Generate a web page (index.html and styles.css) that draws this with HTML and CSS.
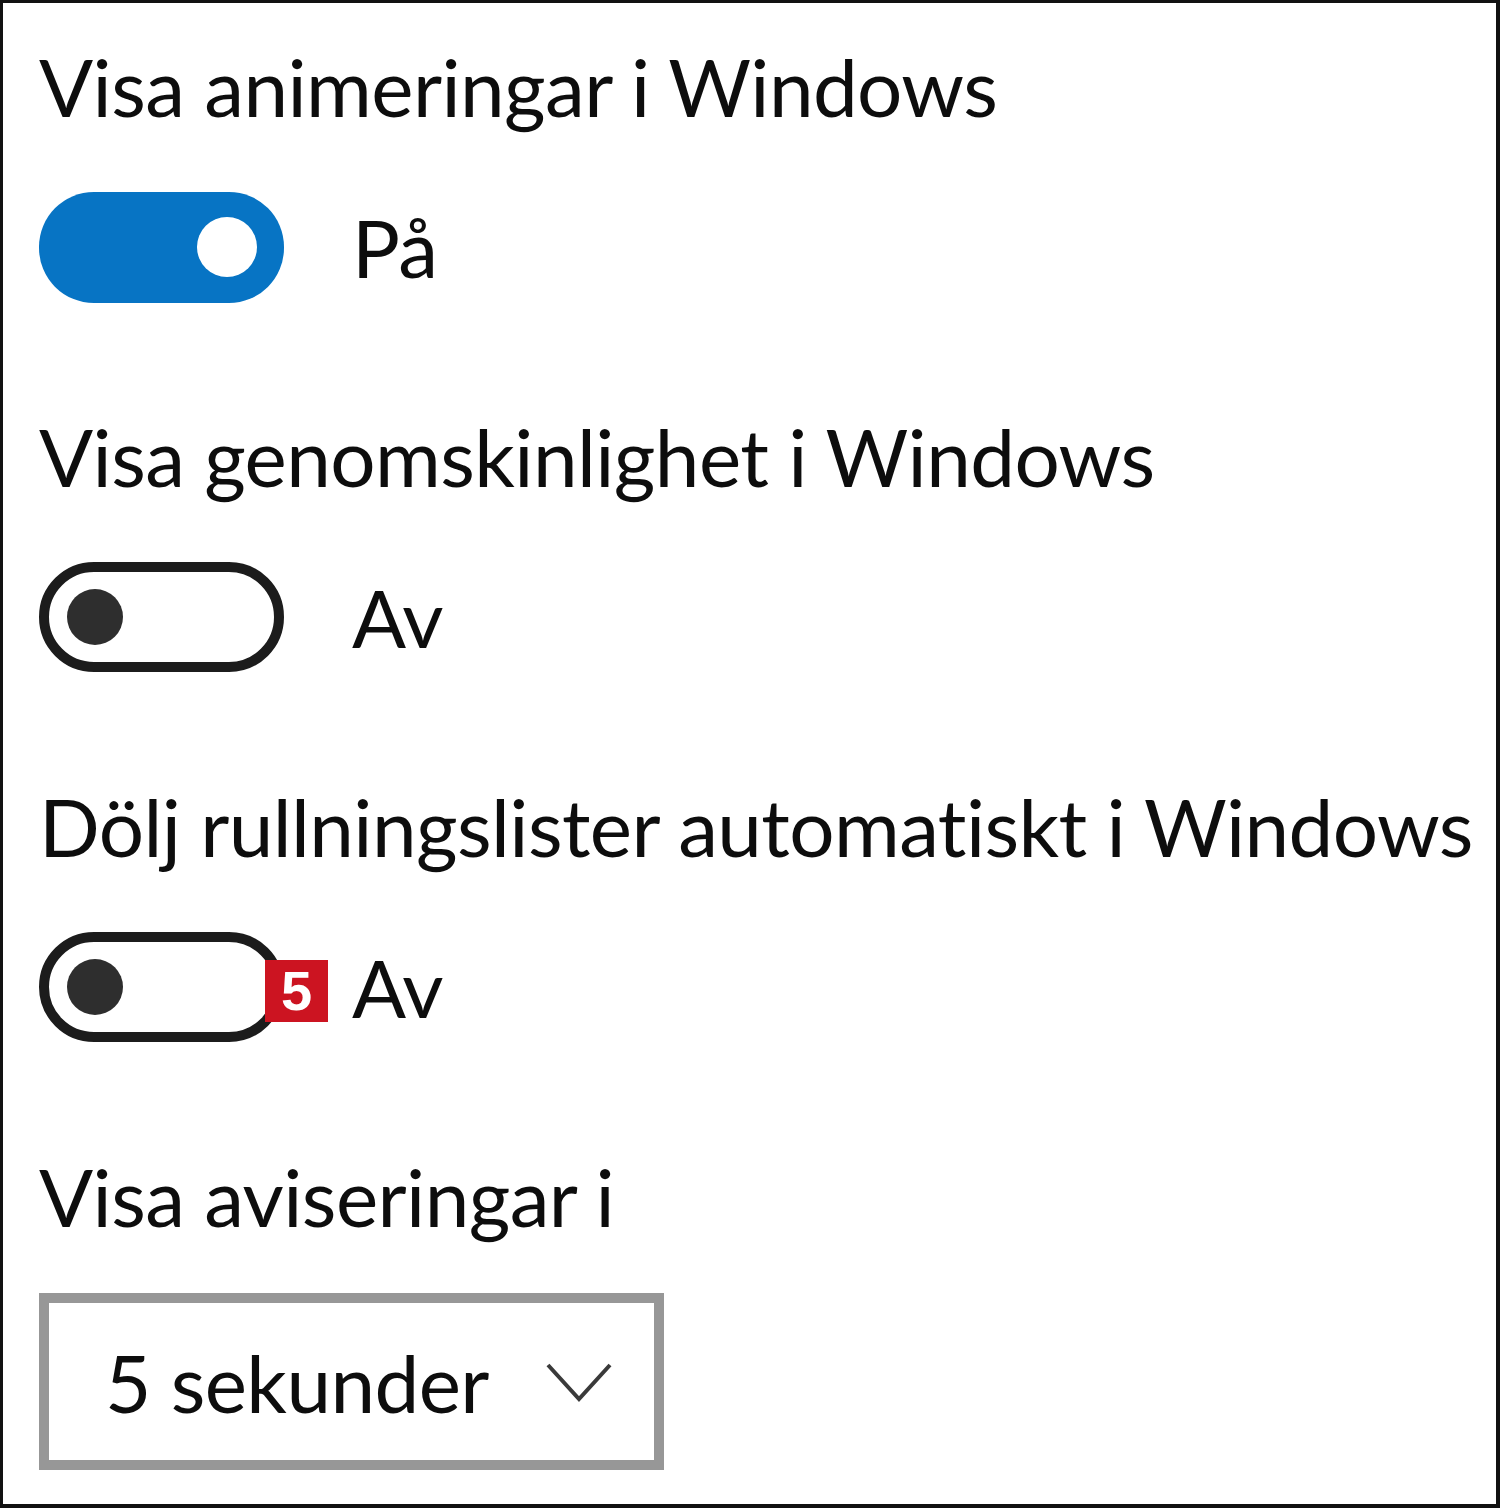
FILE: index.html
```html
<!DOCTYPE html>
<html lang="sv">
<head>
    <meta charset="UTF-8">
    <meta name="viewport" content="width=device-width, initial-scale=1.0">
    <title>Visuella effekter</title>
    <link rel="stylesheet" href="styles.css">
</head>
<body>
    <div class="panel">
        <div class="setting">
            <div class="setting-title">Visa animeringar i Windows</div>
            <div class="toggle-row">
                <span class="toggle on"><span class="knob"></span></span>
                <span class="toggle-label">På</span>
            </div>
        </div>

        <div class="setting">
            <div class="setting-title">Visa genomskinlighet i Windows</div>
            <div class="toggle-row">
                <span class="toggle"><span class="knob"></span></span>
                <span class="toggle-label">Av</span>
            </div>
        </div>

        <div class="setting">
            <div class="setting-title">Dölj rullningslister automatiskt i Windows</div>
            <div class="toggle-row">
                <span class="toggle"><span class="knob"></span></span>
                <span class="badge">5</span>
                <span class="toggle-label">Av</span>
            </div>
        </div>

        <div class="setting last">
            <div class="setting-title">Visa aviseringar i</div>
            <div class="dropdown">
                <span class="dropdown-value">5 sekunder</span>
                <svg class="chevron" width="66" height="40" viewBox="0 0 66 40">
                    <polyline points="2,3 33,37 64,3" fill="none" stroke="#3a3a3a" stroke-width="4"/>
                </svg>
            </div>
        </div>
    </div>
</body>
</html>
```

FILE: styles.css
```css
html, body {
    margin: 0;
    padding: 0;
    background: #fff;
}
.panel {
    box-sizing: border-box;
    width: 1500px;
    height: 1508px;
    border: 3px solid #111;
    border-right-width: 4px;
    border-bottom-width: 4px;
    padding: 33px 0 0 36px;
    font-family: Lato, "Open Sans", sans-serif;
    color: #0d0d0d;
}
.setting {
    margin-bottom: 104px;
}
.setting.last {
    margin-bottom: 0;
}
.setting-title {
    font-size: 80px;
    letter-spacing: -0.6px;
    line-height: 100px;
    margin-bottom: 56px;
    white-space: nowrap;
}
.setting.last .setting-title {
    margin-bottom: 47px;
}
.toggle-row {
    position: relative;
    display: flex;
    align-items: center;
    height: 110px;
}
.toggle {
    box-sizing: border-box;
    display: flex;
    align-items: center;
    width: 245px;
    height: 110px;
    border: 10px solid #1c1c1c;
    border-radius: 55px;
    padding-left: 18px;
}
.toggle .knob {
    width: 56px;
    height: 56px;
    border-radius: 50%;
    background: #2e2e2e;
}
.toggle.on {
    height: 111px;
    border: none;
    background: #0774c4;
    justify-content: flex-end;
    padding: 0 27px 0 0;
}
.toggle.on .knob {
    width: 60px;
    height: 60px;
    background: #fff;
}
.toggle-label {
    margin-left: 68px;
    font-size: 80px;
    letter-spacing: -0.6px;
    line-height: 100px;
}
.badge {
    position: absolute;
    left: 226px;
    top: 28px;
    width: 63px;
    height: 62px;
    background: #cc1421;
    color: #fff;
    font-family: "Liberation Sans", Arial, sans-serif;
    font-weight: bold;
    font-size: 56px;
    line-height: 62px;
    text-align: center;
}
.dropdown {
    box-sizing: border-box;
    display: flex;
    align-items: center;
    justify-content: space-between;
    width: 625px;
    height: 177px;
    border: 10px solid #979797;
    padding: 0 42px 0 56px;
}
.dropdown-value {
    font-size: 80px;
    letter-spacing: -0.6px;
    line-height: 100px;
}
.chevron {
    display: block;
}
```
